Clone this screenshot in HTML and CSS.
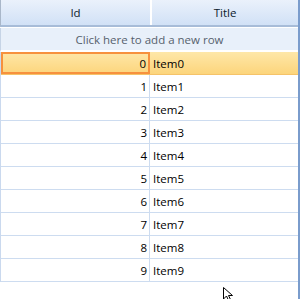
FILE: index.html
```html
<!DOCTYPE html>
<html>
<head>
<meta charset="utf-8">
<link rel="stylesheet" href="styles.css">
</head>
<body>
<div class="grid">
  <div class="header">
    <div class="hcell id">Id</div>
    <div class="hcell title">Title</div>
  </div>
  <div class="addrow">Click here to add a new row</div>
  <div class="rows">
    <div class="row selected"><div class="cell id current">0</div><div class="cell title">Item0</div></div>
    <div class="row"><div class="cell id">1</div><div class="cell title">Item1</div></div>
    <div class="row"><div class="cell id">2</div><div class="cell title">Item2</div></div>
    <div class="row"><div class="cell id">3</div><div class="cell title">Item3</div></div>
    <div class="row"><div class="cell id">4</div><div class="cell title">Item4</div></div>
    <div class="row"><div class="cell id">5</div><div class="cell title">Item5</div></div>
    <div class="row"><div class="cell id">6</div><div class="cell title">Item6</div></div>
    <div class="row"><div class="cell id">7</div><div class="cell title">Item7</div></div>
    <div class="row"><div class="cell id">8</div><div class="cell title">Item8</div></div>
    <div class="row"><div class="cell id">9</div><div class="cell title">Item9</div></div>
  </div>
  <svg class="cursor" width="12" height="16" viewBox="0 0 12 16"><path d="M0.5 0.5 L0.5 12 L3.5 9 L6 14.5 L8 13.5 L5.5 8.5 L9.5 8.5 Z" fill="#fff" stroke="#000" stroke-width="1"/></svg>
</div>
</body>
</html>
```
FILE: styles.css
```css
html, body { margin: 0; padding: 0; background: #fff; }
body { width: 300px; height: 299px; overflow: hidden; font-family: "Open Sans", "Liberation Sans", sans-serif; font-size: 11.5px; color: #000; }
.grid { position: relative; width: 298px; height: 299px; border-right: 2px solid #7a9ccc; }
.header { display: flex; height: 25px; border-bottom: 2px solid #a7bcd8; border-left: 1px solid #a9b7c9; background: linear-gradient(#eaf1fb, #d1e1f6); }
.hcell { display: flex; align-items: center; justify-content: center; color: #0c1a2c; }
.hcell.id { width: 149px; border-right: 1px solid #fff; box-shadow: 1px 0 0 #c5d3e6; }
.hcell.title { flex: 1; border-left: 1px solid #fff; }
.addrow { margin-top: 1px; height: 22px; border-left: 1px solid #c6d4e6; border-bottom: 2px solid #fff; background: #e8f0fa; color: #56616d; display: flex; align-items: center; justify-content: center; }
.rows { border-left: 1px solid #cad9ee; }
.row { display: flex; height: 22px; border-bottom: 1px solid #cddcf0; }
.cell { display: flex; align-items: center; box-sizing: border-box; }
.cell.id { width: 149px; justify-content: flex-end; padding-right: 2px; border-right: 1px solid #cddcf0; }
.cell.title { flex: 1; padding-left: 3px; }
.row.selected { background: linear-gradient(#fee7a8, #fcd57c); border-bottom-color: #f5c369; }
.cell.current { border: 2px solid #f7913d; }
.cursor { position: absolute; left: 223px; top: 287px; }
```
